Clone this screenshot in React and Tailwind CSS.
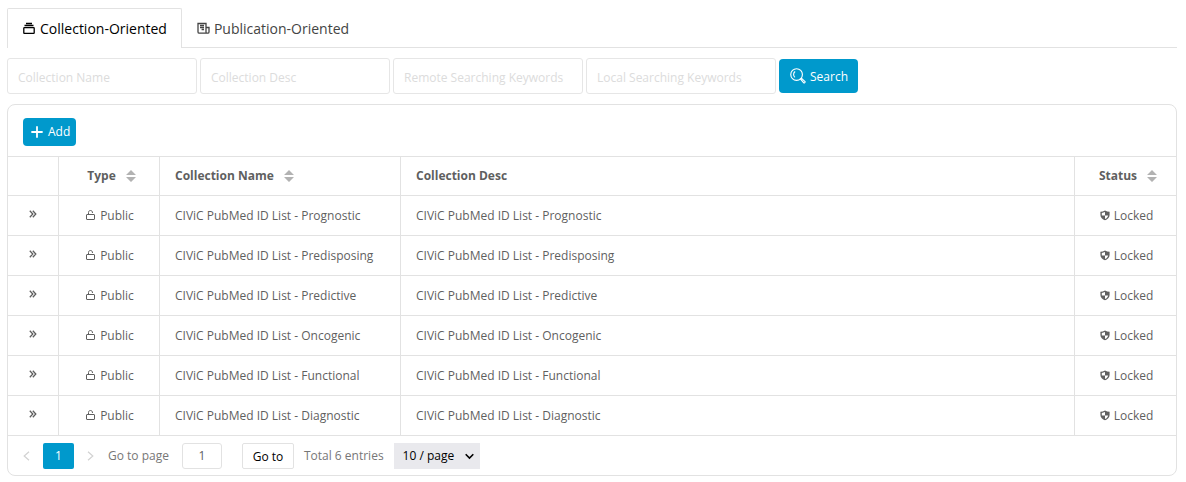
import React from "react";

const COLLECTIONS = ["Prognostic", "Predisposing", "Predictive", "Oncogenic", "Functional", "Diagnostic"];

const FILTERS = ["Collection Name", "Collection Desc", "Remote Searching Keywords", "Local Searching Keywords"];

function StackIcon() {
  return (
    <svg width="12" height="14" viewBox="0 0 12 14" fill="none" stroke="currentColor" strokeWidth="1.3" aria-hidden="true">
      <path d="M3 1.500h6M1.500 3.500h9" />
      <rect x=".8" y="5.600" width="10.400" height="5.800" rx=".6" />
    </svg>
  );
}

function NewsIcon() {
  return (
    <svg width="13" height="14" viewBox="0 0 13 14" fill="none" stroke="currentColor" strokeWidth="1.3" aria-hidden="true">
      <path d="M9 5.500V1.500H1v8.400c0 .8.500 1.300 1.300 1.300h8.400c.8 0 1.300-.5 1.300-1.300V5.500H9v4.400c0 .8.400 1.300 1.200 1.300" />
      <path d="M3 3.500h4M3 5.500h4M4.600 7.500H7" />
    </svg>
  );
}

function SearchIcon() {
  return (
    <svg width="16" height="16" viewBox="0 0 17 17" fill="none" stroke="currentColor" strokeWidth="1.2" aria-hidden="true">
      <circle cx="7" cy="7" r="6.200" />
      <path d="M5.500 3.800C3.400 5 3.200 8.400 5.300 10" />
      <path d="M11.300 11.900l.9-.9 3.800 3.400c.5.500-.8 1.900-1.400 1.400z" />
    </svg>
  );
}

function PlusIcon() {
  return (
    <svg width="12" height="12" viewBox="0 0 12 12" fill="none" stroke="currentColor" strokeWidth="1.800" strokeLinecap="round" aria-hidden="true">
      <path d="M6 1v10M1 6h10" />
    </svg>
  );
}

function SortIcon() {
  return (
    <svg width="10" height="12" viewBox="0 0 10 12" fill="#b2b2b2" aria-hidden="true">
      <path d="M5 0l5 5H0zM5 12L0 7h10z" />
    </svg>
  );
}

function ExpandIcon() {
  return (
    <svg width="8" height="8" viewBox="0 0 8 8" fill="none" stroke="currentColor" strokeWidth="1.300" aria-hidden="true">
      <path d="M.8.8L3.800 4 .8 7.200M3.800.8L6.800 4 3.800 7.200" />
    </svg>
  );
}

function UnlockIcon() {
  return (
    <svg width="9" height="11" viewBox="0 0 9 11" fill="none" stroke="currentColor" aria-hidden="true">
      <rect x=".5" y="4.500" width="8" height="5" rx=".5" />
      <path d="M2.500 4.500V2.500C2.500 1.200 3.300.5 4.500.5S6.500 1.200 6.500 3" />
    </svg>
  );
}

function ShieldIcon() {
  return (
    <svg width="10" height="12" viewBox="0 0 10 12" fill="currentColor" aria-hidden="true">
      <path fillRule="evenodd" d="M5 .5c1.300.8 2.900 1.200 4.600 1.200v3.200C9.600 7.500 7.500 9.400 5 10.300 2.500 9.400.4 7.500.4 4.900V1.700C2.100 1.700 3.700 1.300 5 .5zM5 2.100C4.100 2.600 3 2.900 1.800 3v2.400H5zM5 5.400v3.500c1.700-.7 2.900-1.900 3.200-3.500z" />
    </svg>
  );
}

function ChevronIcon({ flip }) {
  return (
    <svg width="7" height="10" viewBox="0 0 7 10" fill="none" stroke="currentColor" strokeWidth="1.200" aria-hidden="true">
      <path d={flip ? "M1 .8L5.800 5 1 9.200" : "M6 .8L1.200 5 6 9.200"} />
    </svg>
  );
}

function Heading({ children, center, sortable, last }) {
  return (
    <th scope="col" className={`h-[39px] border-b border-[#e2e2e2] font-bold ${center ? "pr-2.5 pl-[15px]" : "px-[15px]"} ${last ? "" : "border-r"}`}>
      <div className={`flex items-center gap-2.5 ${center ? "justify-center" : ""}`}>
        <span>{children}</span>
        {sortable && (
          <button type="button" aria-label={`Sort by ${children}`}>
            <SortIcon />
          </button>
        )}
      </div>
    </th>
  );
}

export default function App() {
  const cell = "h-10 border-b border-[#e2e2e2]";
  return (
    <main className="bg-white px-2 pt-2 font-['Open_Sans',sans-serif] text-xs text-[#5f5f5f]">
      <div className="-ml-px mr-px">
        <nav className="flex h-10 text-sm" role="tablist">
          <button type="button" role="tab" aria-selected="true" className="flex items-center gap-[5px] rounded-t-xs border border-b-0 border-[#e2e2e2] pr-3.5 pl-[15px] text-black">
            <StackIcon />
            Collection-Oriented
          </button>
          <button type="button" role="tab" aria-selected="false" className="flex grow items-center gap-1 border-b border-[#e2e2e2] px-[15px] pt-0.5 text-[#444]">
            <NewsIcon />
            Publication-Oriented
          </button>
        </nav>

        <form className="mt-2.5 flex items-center gap-[3px]" onSubmit={(e) => e.preventDefault()}>
          {FILTERS.map((label) => (
            <input
              key={label}
              type="text"
              aria-label={label}
              placeholder={label}
              className="h-9 w-[190px] rounded-[3px] border border-[#e6e6e6] px-2.5 pt-0.5 placeholder:text-[#dcdcdc]"
            />
          ))}
          <button type="submit" className="flex h-[34px] items-center gap-1 rounded-sm bg-[#0099cc] pr-2.5 pl-[11px] text-white">
            <SearchIcon />
            <span className="pt-0.5">Search</span>
          </button>
        </form>

        <section className="mt-2.5 overflow-hidden rounded-lg border border-[#e2e2e2]">
          <div className="flex h-[52px] items-center border-b border-[#e2e2e2] px-[15px] pt-0.5">
            <button type="button" className="flex h-7 items-center gap-[5px] rounded-sm bg-[#0099cc] pr-1.5 pl-2 text-white">
              <PlusIcon />
              Add
            </button>
          </div>

          <table className="w-full table-fixed border-separate border-spacing-0 text-left">
            <colgroup>
              <col className="w-[51px]" />
              <col className="w-[101px]" />
              <col className="w-[241px]" />
              <col />
              <col className="w-[101px]" />
            </colgroup>
            <thead>
              <tr>
                <td className="border-r border-b border-[#e2e2e2]" />
                <Heading center sortable>Type</Heading>
                <Heading sortable>Collection Name</Heading>
                <Heading>Collection Desc</Heading>
                <Heading center sortable last>Status</Heading>
              </tr>
            </thead>
            <tbody>
              {COLLECTIONS.map((kind) => (
                <tr key={kind}>
                  <td className={`${cell} border-r`}>
                    <button type="button" aria-label={`Expand ${kind}`} className="mx-auto block pb-1">
                      <ExpandIcon />
                    </button>
                  </td>
                  <td className={`${cell} border-r pl-0.5`}>
                    <div className="flex items-center justify-center gap-[5px]">
                      <UnlockIcon />
                      Public
                    </div>
                  </td>
                  <td className={`${cell} border-r px-[15px]`}>CIViC PubMed ID List - {kind}</td>
                  <td className={`${cell} border-r px-[15px]`}>CIViC PubMed ID List - {kind}</td>
                  <td className={`${cell} pl-0.5`}>
                    <div className="flex items-center justify-center gap-1">
                      <ShieldIcon />
                      Locked
                    </div>
                  </td>
                </tr>
              ))}
            </tbody>
          </table>

          <footer className="flex h-[39px] items-center px-[15px]">
            <button type="button" disabled aria-label="Previous page" className="text-[#d2d2d2]">
              <ChevronIcon />
            </button>
            <button type="button" aria-current="page" className="ml-[13px] h-[26px] w-[31px] rounded-xs bg-[#0099cc] text-white">
              1
            </button>
            <button type="button" disabled aria-label="Next page" className="ml-[13px] text-[#d2d2d2]">
              <ChevronIcon flip />
            </button>
            <label htmlFor="page" className="ml-3.5 text-[#777]">Go to page</label>
            <input id="page" type="text" defaultValue="1" className="ml-[13px] h-[26px] w-10 rounded-[3px] border border-[#e2e2e2] text-center" />
            <button type="button" className="ml-5 h-[26px] w-[52px] rounded-xs border border-[#e2e2e2] pt-0.5 text-black">
              Go to
            </button>
            <span className="ml-2.5 text-[#777]">Total 6 entries</span>
            <div className="relative ml-2.5">
              <select aria-label="Entries per page" className="h-[26px] w-[86px] appearance-none bg-[#e9e9ed] pl-[9px] text-black">
                <option>10 / page</option>
              </select>
              <svg className="pointer-events-none absolute top-2.5 right-1.5" width="9" height="7" viewBox="0 0 9 7" fill="none" stroke="#000" strokeWidth="1.600" aria-hidden="true">
                <path d="M.7 1.200L4.500 5 8.300 1.200" />
              </svg>
            </div>
          </footer>
        </section>
      </div>
    </main>
  );
}
